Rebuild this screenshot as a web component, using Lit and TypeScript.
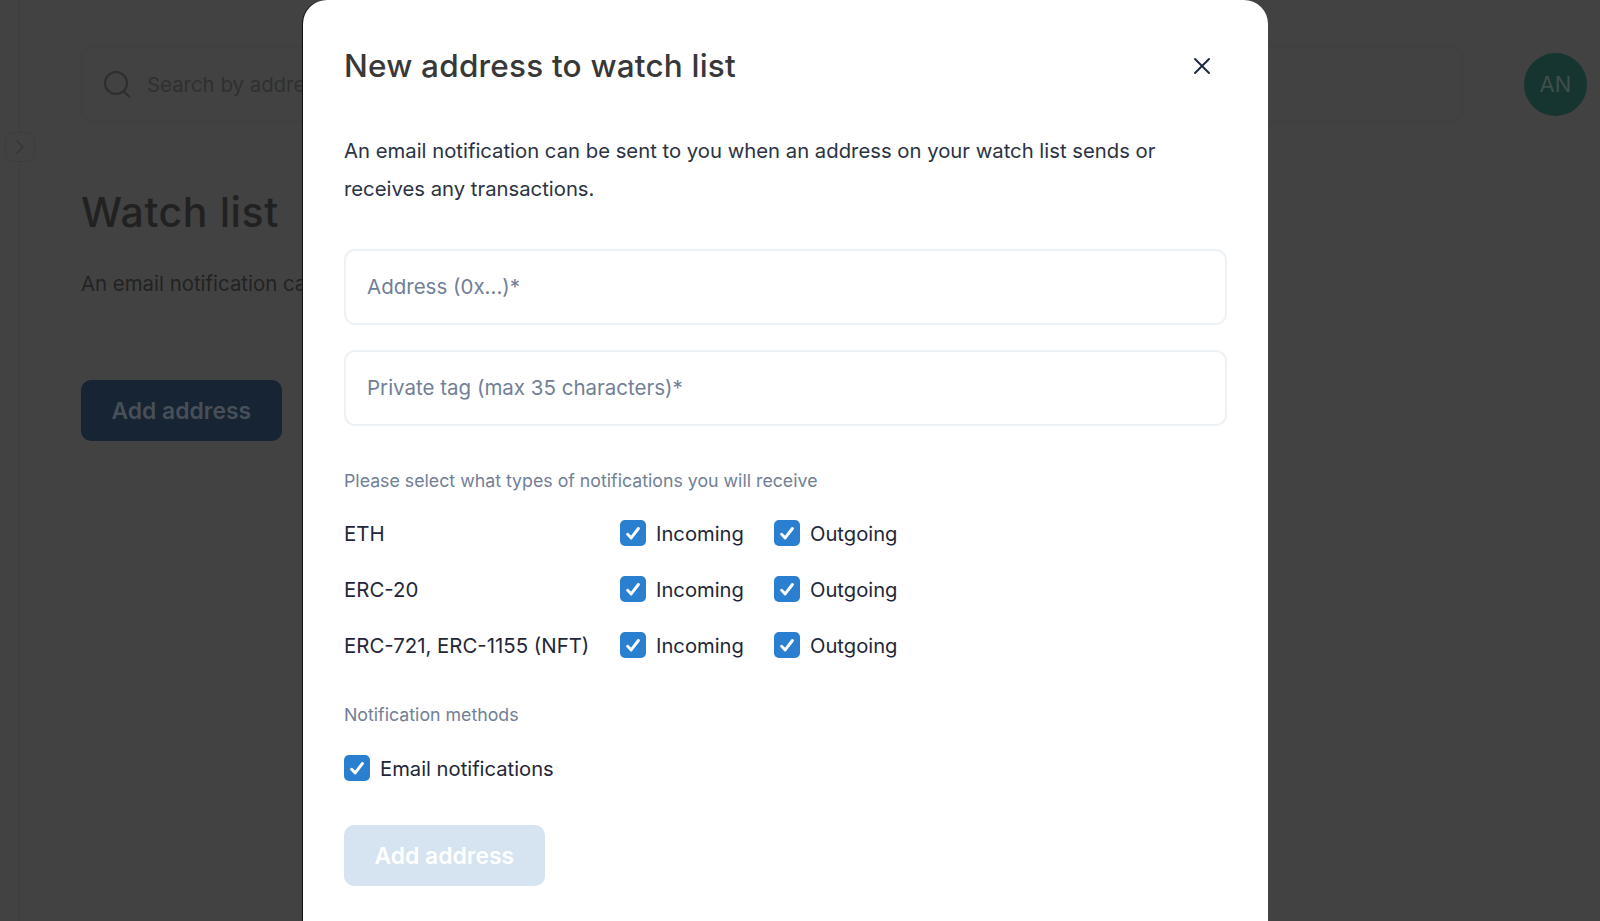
import { LitElement, html, css, svg } from "lit";
import { customElement } from "lit/decorators.js";

const tick = svg`<svg viewBox="0 0 26 26" width="26" height="26"><path d="M7.6 14.2l3.6 3.7 7.2-9.4" fill="none" stroke="#fff" stroke-width="2.9" stroke-linecap="round" stroke-linejoin="round"/></svg>`;

@customElement("app-root")
export class AppRoot extends LitElement {
  static styles = css`
    :host { display: block; position: relative; height: 921px; overflow: hidden; background: #424242; font-family: Inter, "Liberation Sans", sans-serif; }
    .page { display: grid; grid-template-columns: 20px 1fr; height: 921px; }
    .rail { border-right: 1px solid #3d3d3d; }
    .main { padding: 46px 12px 0 61px; }
    .top { display: flex; align-items: center; gap: 61px; }
    .search { flex: 0 0 1382px; height: 76px; box-sizing: border-box; border: 1px solid #3e3e3e; border-radius: 10px; display: flex; align-items: center; padding-left: 20px; gap: 15px; font-size: 20.4px; white-space: nowrap; }
    .search span { color: #303030; width: 157px; overflow: hidden; }
    .avatar { flex: 0 0 63px; height: 63px; border-radius: 50%; background: #163430; color: #3f4f4b; display: flex; align-items: center; justify-content: center; font-size: 22px; }
    h1 { margin: 64px 0 0; font-size: 41px; line-height: 52px; font-weight: 500; color: #212121; letter-spacing: 0.6px; }
    .bgtext { margin: 31px 0 0; width: 222px; overflow: hidden; font-size: 20.4px; line-height: 30px; color: #222; white-space: nowrap; }
    .bgbtn { margin-top: 81px; width: 200.5px; height: 61px; border-radius: 10px; background: #162433; color: #474f58; font-size: 22.9px; font-weight: 600; display: flex; align-items: center; justify-content: center; }
    .expand { position: absolute; left: 5px; top: 132px; width: 30px; height: 30px; box-sizing: border-box; background: #424242; border: 1px solid #3d3d3d; border-radius: 9px; display: flex; align-items: center; justify-content: center; }

    .modal { position: absolute; left: 303px; top: 0; width: 965px; height: 921px; box-sizing: border-box; background: #fff; border-radius: 24px 24px 0 0; padding: 41px; box-shadow: -1px 0 0 #111; color: #1f2738; font-size: 20.4px; }
    .head { display: flex; justify-content: space-between; align-items: center; height: 48px; }
    h2 { margin: 0; font-size: 31.5px; font-weight: 500; color: #383838; letter-spacing: 0.2px; white-space: nowrap; }
    .close { margin: 2px 13.5px 0 0; display: flex; }
    .intro { margin: 43px 0 0; line-height: 38px; color: #2b3242; font-size: 20.3px; }
    .input { margin-top: 25px; height: 76px; box-sizing: border-box; border: 2px solid #edf2f7; border-radius: 11px; display: flex; align-items: center; padding: 0 0 2px 21px; color: #718096; font-size: 20.5px; }
    .intro + .input { margin-top: 41px; }
    .sec { font-size: 17.75px; color: #718096; line-height: 24px; }
    .sec.a { margin-top: 43px; }
    .sec.b { margin-top: 30px; }
    .rows { margin-top: 12px; display: grid; grid-template-columns: 276px 154px max-content; grid-auto-rows: 56px; align-items: center; }
    .rows > span { white-space: nowrap; }
    .check { display: flex; align-items: center; gap: 10px; white-space: nowrap; font-size: 20.2px; }
    .box { flex: 0 0 25.5px; height: 25.5px; border-radius: 5px; background: #2b7fd0; display: flex; }
    .email { margin-top: 25px; height: 32px; }
    .add { margin-top: 41px; width: 200.5px; height: 61px; border-radius: 10px; background: #d6e3f0; color: #fff; font-size: 22.9px; font-weight: 600; display: flex; align-items: center; justify-content: center; }
  `;

  private check(label: string, cls = "") {
    return html`<div class="check ${cls}"><span class="box">${tick}</span>${label}</div>`;
  }

  render() {
    const rows = ["ETH", "ERC-20", "ERC-721, ERC-1155 (NFT)"];
    return html`
      <div class="page">
        <div class="rail"></div>
        <div class="main">
          <div class="top">
            <div class="search">
              <svg width="30" height="30" viewBox="0 0 30 30" fill="none" stroke="#2e2e2e" stroke-width="2.2" stroke-linecap="round"><circle cx="14" cy="14" r="11"/><path d="M22 22.5l5 5"/></svg>
              <span>Search by address</span>
            </div>
            <div class="avatar">AN</div>
          </div>
          <h1>Watch list</h1>
          <p class="bgtext">An email notification can be sent</p>
          <div class="bgbtn">Add address</div>
        </div>
      </div>
      <div class="expand">
        <svg width="12" height="16" viewBox="0 0 12 16" fill="none" stroke="#363636" stroke-width="1.6" stroke-linecap="round" stroke-linejoin="round"><path d="M3 2l6 6-6 6"/></svg>
      </div>
      <div class="modal">
        <div class="head">
          <h2>New address to watch list</h2>
          <span class="close"><svg width="24" height="24" viewBox="0 0 24 24" fill="none" stroke="#1d2b42" stroke-width="2" stroke-linecap="round"><path d="M5 5l14 14M19 5L5 19"/></svg></span>
        </div>
        <p class="intro">An email notification can be sent to you when an address on your watch list sends or receives any transactions.</p>
        <div class="input">Address (0x...)*</div>
        <div class="input">Private tag (max 35 characters)*</div>
        <div class="sec a">Please select what types of notifications you will receive</div>
        <div class="rows">
          ${rows.map((r) => html`<span>${r}</span>${this.check("Incoming")}${this.check("Outgoing")}`)}
        </div>
        <div class="sec b">Notification methods</div>
        ${this.check("Email notifications", "email")}
        <div class="add">Add address</div>
      </div>
    `;
  }
}
